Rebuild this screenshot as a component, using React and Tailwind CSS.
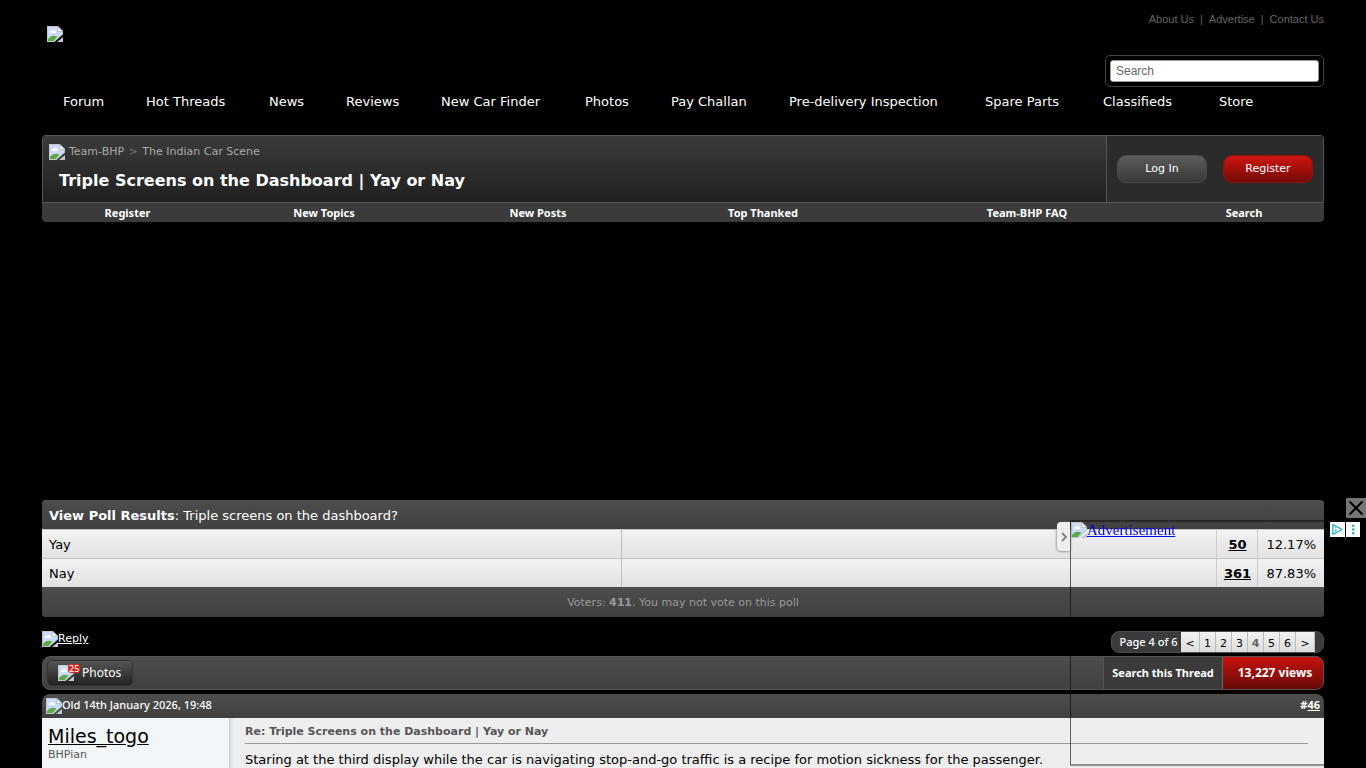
const navLinks = [
  "Forum",
  "Hot Threads",
  "News",
  "Reviews",
  "New Car Finder",
  "Photos",
  "Pay Challan",
  "Pre-delivery Inspection",
  "Spare Parts",
  "Classifieds",
  "Store",
];

const subLinks = ["Register", "New Topics", "New Posts", "Top Thanked", "Team-BHP FAQ", "Search"];

const pollRows = [
  { option: "Yay", votes: "50", percent: "12.17%" },
  { option: "Nay", votes: "361", percent: "87.83%" },
];

const pages = ["<", "1", "2", "3", "4", "5", "6", ">"];

/**
 * MissingImage - Torn page icon shown where an image has not loaded.
 */
function MissingImage({ className = "" }) {
  return (
    <svg className={`h-4 w-4 shrink-0 ${className}`} viewBox="0 0 16 16" aria-hidden="true">
      <path d="M0 0h11l5 5v3.500L7.500 16H0z" fill="#c3c6ca" />
      <path d="M1 1h9.500L15 5.500V8L6.500 15H1z" fill="#cbdcf8" />
      <path d="M3 7a1.500 1.500 0 0 1 1.500-2 2 2 0 0 1 3.500 0 1.500 1.500 0 0 1 1 2z" fill="#fff" />
      <path d="M1 15v-2c2-3 6-4.200 9.500-2.500L6.500 15z" fill="#5aa848" />
      <path d="M10.500 0.500v5H16z" fill="#f4f6f8" stroke="#b4b8bd" strokeWidth="0.8" />
      <path d="M16 11v5h-6z" fill="#c3c6ca" />
    </svg>
  );
}

function SiteHeader() {
  return (
    <header>
      <div className="flex items-start justify-between">
        <a href="#" aria-label="Home" className="ml-[5px] mt-[26px]">
          <MissingImage />
        </a>
        <div className="flex flex-col items-end">
          <div className="mt-3 flex gap-[6px] font-['Liberation_Sans',sans-serif] text-[11px] leading-[14px] text-[#666]">
            <a href="#">About Us</a>
            <span>|</span>
            <a href="#">Advertise</a>
            <span>|</span>
            <a href="#">Contact Us</a>
          </div>
          <div className="mt-[29px] flex h-8 w-[219px] items-center rounded-[5px] border border-[#444] px-1">
            <input
              type="text"
              aria-label="Search"
              placeholder="Search"
              className="h-[22px] w-full rounded-[3px] border border-[#999] bg-white px-[5px] font-['Liberation_Sans',sans-serif] text-xs text-black placeholder:text-[#666]"
            />
          </div>
        </div>
      </div>
      <nav className="mt-[7px] grid grid-cols-[83fr_123fr_77fr_95fr_144fr_86fr_118fr_196fr_118fr_116fr_105fr] pl-[21px] text-[13px] leading-4 text-white">
        {navLinks.map((label) => (
          <a key={label} href="#" className="whitespace-nowrap">
            {label}
          </a>
        ))}
      </nav>
    </header>
  );
}

function ThreadHeader() {
  return (
    <section className="mt-[25px] overflow-hidden rounded-[4px] bg-[#3b3b3b]">
      <div className="flex h-[68px] rounded-t-[4px] border border-[#555]">
        <div className="flex-1 bg-linear-to-b from-[#3b3b3b] to-[#202020] pl-[6px] pt-2">
          <div className="flex items-center gap-1 text-[11px] leading-4 text-[#aaa]">
            <MissingImage />
            <span>
              <a href="#">Team-BHP</a> <span className="mx-px text-[#777]">&gt;</span>{" "}
              <a href="#">The Indian Car Scene</a>
            </span>
          </div>
          <h1 className="ml-[10px] mt-[11px] text-base leading-5 font-bold text-white">
            Triple Screens on the Dashboard | Yay or Nay
          </h1>
        </div>
        <div className="flex w-[217px] items-center gap-4 border-l border-[#555] bg-[#2b2b2b] px-[10px] text-[11px] text-white">
          <button
            type="button"
            className="h-7 w-[90px] rounded-[9px] border border-[#4a4a4a] bg-linear-to-b from-[#5c5c5c] to-[#393939]"
          >
            Log In
          </button>
          <button
            type="button"
            className="h-7 w-[90px] rounded-[9px] border border-[#8c1410] bg-linear-to-b from-[#cf1510] to-[#760b08]"
          >
            Register
          </button>
        </div>
      </div>
      <nav className="grid grid-cols-[171fr_222fr_206fr_244fr_284fr_150fr] pr-[5px] text-center font-['Noto_Sans',sans-serif] text-[11px] leading-[19px] font-bold text-white">
        {subLinks.map((label) => (
          <a key={label} href="#">
            {label}
          </a>
        ))}
      </nav>
    </section>
  );
}

function Poll() {
  return (
    <section className="overflow-hidden rounded-[4px] bg-[#444] text-[13px]">
      <table className="w-full table-fixed border-collapse">
        <colgroup>
          <col className="w-[579px]" />
          <col />
          <col className="w-[41px]" />
          <col className="w-[66px]" />
        </colgroup>
        <thead>
          <tr className="h-[29px] bg-linear-to-b from-[#4d4d4d] to-[#404040]">
            <th colSpan={4} className="pl-[7px] pt-[2px] text-left font-normal text-white">
              <strong>View Poll Results</strong>: Triple screens on the dashboard?
            </th>
          </tr>
        </thead>
        <tbody>
          {pollRows.map((row) => (
            <tr
              key={row.option}
              className="h-[29px] border-t border-[#c4c4c4] bg-linear-to-b from-[#f2f2f2] to-[#e2e2e2] text-black"
            >
              <td className="pl-[7px] pt-[2px]">{row.option}</td>
              <td className="border-l border-[#bbb]" />
              <td className="border-l border-[#ccc] pt-[2px] text-center">
                <a href="#" className="font-bold underline">
                  {row.votes}
                </a>
              </td>
              <td className="border-l border-[#ccc] pt-[2px] text-center">{row.percent}</td>
            </tr>
          ))}
        </tbody>
        <tfoot>
          <tr className="h-[30px] bg-linear-to-b from-[#4d4d4d] to-[#404040]">
            <td colSpan={4} className="pt-[3px] text-center text-[11px] text-[#999]">
              Voters: <strong>411</strong>. You may not vote on this poll
            </td>
          </tr>
        </tfoot>
      </table>
    </section>
  );
}

function ThreadTools() {
  return (
    <>
      <div className="mt-[14px] flex h-[22px] items-start justify-between">
        <a href="#" className="flex text-[11px] leading-4 text-white underline">
          <MissingImage />
          Reply
        </a>
        <div className="flex h-[22px] overflow-hidden rounded-lg border border-[#4d4d4d] bg-[#3b3b3b] pr-2">
          <span className="w-[69px] pl-1 text-center font-['Noto_Sans',sans-serif] text-[11px] leading-5 font-medium whitespace-nowrap text-white">
            Page 4 of 6
          </span>
          {pages.map((page) => (
            <a
              key={page}
              href="#"
              className={`border-r border-[#bbb] bg-linear-to-b from-[#f2f2f2] to-[#ddd] text-center text-[11px] leading-[23px] ${
                page === "<" || page === ">" ? "w-[19px]" : "w-4"
              } ${page === "4" ? "font-bold text-[#666]" : "text-black"}`}
            >
              {page}
            </a>
          ))}
        </div>
      </div>
      <div className="mt-[3px] flex h-[34px] items-stretch overflow-hidden rounded-lg border border-[#555] bg-linear-to-b from-[#4d4d4d] to-[#404040]">
        <button
          type="button"
          className="relative my-[3px] ml-1 flex w-[86px] items-center gap-2 rounded-[5px] border border-[#333] bg-linear-to-b from-[#555] to-[#222] pl-[10px] font-['Noto_Sans',sans-serif] text-xs text-white"
        >
          <MissingImage />
          Photos
          <span className="absolute left-[20px] top-[3px] rounded-[3px] bg-[#d32a1e] px-px text-[9px] leading-[9px]">
            25
          </span>
        </button>
        <a
          href="#"
          className="ml-auto w-[119px] border-l border-[#555] bg-[#3b3b3b] text-center font-['Noto_Sans',sans-serif] text-[11px] leading-8 font-bold text-white"
        >
          Search this Thread
        </a>
        <span className="w-[101px] border-l border-[#666] bg-linear-to-b from-[#c8120d] to-[#680a08] pl-1 text-center font-['Noto_Sans',sans-serif] text-xs leading-8 font-bold text-white">
          13,227 views
        </span>
      </div>
    </>
  );
}

function Post() {
  return (
    <article className="mt-1 flex flex-1 flex-col">
      <div className="flex h-6 items-center justify-between rounded-t-lg bg-linear-to-b from-[#4d4d4d] to-[#404040] px-1 pb-px font-['Noto_Sans',sans-serif] text-[11px] text-white">
        <span className="flex items-center font-medium">
          <MissingImage />
          Old 14th January 2026, 19:48
        </span>
        <span className="font-bold">
          #
          <a href="#" className="underline">
            46
          </a>
        </span>
      </div>
      <div className="flex flex-1 bg-[#eee]">
        <div className="w-[187px] bg-[#f3f6f9] pl-[6px] pt-[6px]">
          <a href="#" className="block text-[19px] leading-6 text-black underline">
            Miles_togo
          </a>
          <div className="text-[11px] leading-[14px] text-[#555]">BHPian</div>
        </div>
        <div className="w-[5px] bg-linear-to-r from-[#d5d5d5] to-[#eee]" />
        <div className="flex-1 pl-[11px] pr-4 pt-[7px]">
          <h2 className="text-[11px] leading-[14px] font-bold text-[#555]">
            Re: Triple Screens on the Dashboard | Yay or Nay
          </h2>
          <hr className="mt-1 border-[#999]" />
          <p className="mt-2 text-[13px] leading-4 text-black">
            Staring at the third display while the car is navigating stop-and-go traffic is a recipe for motion
            sickness for the passenger.
          </p>
        </div>
      </div>
    </article>
  );
}

function FloatingAd() {
  return (
    <aside className="fixed bottom-[2px] right-0 h-[246px] w-[296px] border-y-2 border-l border-y-black/40 border-l-black/60">
      <a href="#" className="flex font-['Liberation_Serif',serif] text-[15px] leading-4 text-[#0000ee] underline">
        <MissingImage />
        Advertisement
      </a>
      <button
        type="button"
        aria-label="Collapse ad"
        className="absolute -left-[14px] top-0 flex h-[29px] w-[13px] items-center justify-center rounded-l-[4px] bg-[#eee] shadow-[0_0_3px_#555]"
      >
        <svg className="h-[10px] w-[6px]" viewBox="0 0 6 10" fill="none" stroke="#888" strokeWidth="2">
          <path d="M1 1l4 4-4 4" />
        </svg>
      </button>
      <button type="button" aria-label="Close ad" className="absolute -top-[24px] right-0 h-5 w-5 bg-[#757575]">
        <svg viewBox="0 0 20 20" fill="none" stroke="#000" strokeWidth="2">
          <path d="M3.500 3.500l13 13M16.500 3.500l-13 13" />
        </svg>
      </button>
      <div className="absolute right-[6px] top-0 flex h-[15px] w-[30px] gap-px">
        <svg className="flex-1 bg-white" viewBox="0 0 15 15" fill="none" stroke="#22aec6">
          <path d="M3 2.500v10l9.500-5z" strokeWidth="1.300" strokeLinejoin="round" />
          <path d="M6 5v.8M6 6.800v3" strokeWidth="1.200" />
        </svg>
        <svg className="flex-1 bg-white" viewBox="0 0 15 15" fill="#22aec6">
          <circle cx="7.500" cy="3.500" r="1.300" />
          <circle cx="7.500" cy="7.500" r="1.300" />
          <circle cx="7.500" cy="11.500" r="1.300" />
        </svg>
      </div>
    </aside>
  );
}

export default function App() {
  return (
    <div className="flex min-h-screen flex-col bg-black px-[42px] font-[Verdana,'DejaVu_Sans',sans-serif]">
      <SiteHeader />
      <ThreadHeader />
      <div className="h-[278px]" />
      <Poll />
      <ThreadTools />
      <Post />
      <FloatingAd />
    </div>
  );
}
